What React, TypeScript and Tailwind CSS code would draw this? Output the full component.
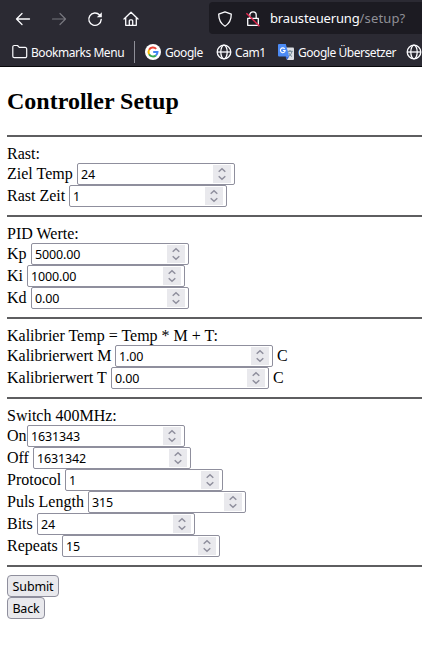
import React from 'react';

const ui = "font-['Noto_Sans','Open_Sans',sans-serif]";

function Globe() {
  return (
    <svg width="16" height="16" viewBox="0 0 16 16" fill="none" stroke="#fbfbfe" strokeWidth="1.3" className="shrink-0">
      <circle cx="8" cy="8" r="6.8" />
      <ellipse cx="8" cy="8" rx="3.2" ry="6.8" />
      <path d="M1.2 8h13.6" />
    </svg>
  );
}

function Google() {
  return (
    <svg width="16" height="16" viewBox="0 0 16 16" fill="none" strokeWidth="2" className="shrink-0">
      <circle cx="8" cy="8" r="8" fill="#fff" />
      <path d="M11.2 4.9A4.5 4.5 0 0 0 4.1 5.8" stroke="#ea4335" />
      <path d="M4.1 5.8a4.5 4.5 0 0 0 0 4.4" stroke="#fbbc05" />
      <path d="M4.1 10.2a4.5 4.5 0 0 0 6.8 1.2" stroke="#34a853" />
      <path d="M10.9 11.4A4.3 4.3 0 0 0 12.5 8.1H8.2" stroke="#4285f4" />
    </svg>
  );
}

function Translate() {
  return (
    <svg width="16" height="16" viewBox="0 0 16 16" fill="none" className="shrink-0">
      <path d="M6 3.5h9a1 1 0 0 1 1 1V15a1 1 0 0 1-1 1H9z" fill="#dcdfe4" />
      <path d="M9.3 7.3h5.4M12 6v1.3M14 7.5c-.7 2.5-2 4-3.5 5M10.7 8.6c.7 1.8 1.8 3 3.3 3.9" stroke="#607988" strokeWidth=".9" />
      <path d="M1 0h6.8l3.4 12.5H1a1 1 0 0 1-1-1V1a1 1 0 0 1 1-1z" fill="#4c8bf5" />
      <path d="M7.4 12.5h3.8L9 16z" fill="#3367d6" />
      <path d="M6.7 4.8a2.4 2.4 0 1 0 .5 1.7H4.9" stroke="#fff" strokeWidth="1.1" />
    </svg>
  );
}

function Browser() {
  return (
    <header className={`${ui} h-[67px] overflow-hidden border-b border-[#08080b] bg-[#2b2a33] text-[#fbfbfe]`}>
      <div className="flex h-[38px] items-center">
        <svg width="16" height="16" viewBox="0 0 16 16" fill="none" stroke="#fbfbfe" strokeWidth="1.3" strokeLinecap="round" strokeLinejoin="round" className="ml-[15px] shrink-0">
          <path d="M14.5 8H1.5M7 2.5L1.5 8 7 13.5" />
        </svg>
        <svg width="16" height="16" viewBox="0 0 16 16" fill="none" stroke="#77767e" strokeWidth="1.2" strokeLinecap="round" strokeLinejoin="round" className="ml-5 shrink-0">
          <path d="M1.5 8h13M9 2.5L14.5 8 9 13.5" />
        </svg>
        <svg width="16" height="16" viewBox="0 0 16 16" fill="none" stroke="#fbfbfe" strokeWidth="1.4" strokeLinecap="round" className="ml-5 shrink-0">
          <path d="M12.6 4A6.2 6.2 0 1 0 14.2 8.5" />
          <path d="M14.8 1.2V6.2H9.8z" fill="#fbfbfe" stroke="none" />
        </svg>
        <svg width="16" height="16" viewBox="0 0 16 16" fill="none" stroke="#fbfbfe" strokeWidth="1.3" strokeLinecap="round" strokeLinejoin="round" className="ml-5 shrink-0">
          <path d="M1 8l7-6.7L15 8M2.7 6.8v7.5h10.6V6.8M6.3 14V9.8c0-.6.4-1 1-1h1.4c.6 0 1 .4 1 1V14" />
        </svg>
        <div className="mt-[-2px] ml-[70px] flex h-[32px] w-[240px] shrink-0 items-center rounded-[4px] bg-[#1c1b22] pt-[2px]">
          <svg width="16" height="16" viewBox="0 0 16 16" fill="none" stroke="#fbfbfe" strokeWidth="1.3" strokeLinejoin="round" className="ml-[8px] shrink-0">
            <path d="M8 .8l6.3 2.3c0 5.7-1.7 9.5-6.3 12.1C3.4 12.6 1.7 8.8 1.7 3.1z" />
          </svg>
          <svg width="16" height="16" viewBox="0 0 16 16" fill="none" stroke="#fbfbfe" strokeWidth="1.3" strokeLinejoin="round" className="ml-[12px] shrink-0">
            <path d="M2.7 7.3h10.6v7H2.7zM4.8 7V4a3.2 3.2 0 0 1 6.4 0v3" />
            <path d="M1.4 2.2l13 13" stroke="#e22850" strokeWidth="1.5" />
          </svg>
          <span className="ml-[9px] text-[13px] tracking-[-0.15px] whitespace-nowrap">
            brausteuerung<span className="tracking-[0.15px] text-[#8f8f96]">/setup?</span>
          </span>
        </div>
      </div>
      <nav className="flex h-[28px] items-center text-[12px] tracking-[-0.45px] whitespace-nowrap">
        <svg width="16" height="16" viewBox="0 0 16 16" fill="none" stroke="#fbfbfe" strokeWidth="1.2" strokeLinejoin="round" className="ml-[12px] shrink-0">
          <path d="M.8 3a1.5 1.5 0 0 1 1.5-1.5h3.2L7.3 3.4h5.9a1.5 1.5 0 0 1 1.5 1.5v7.3a1.5 1.5 0 0 1-1.5 1.5H2.3a1.5 1.5 0 0 1-1.5-1.5z" />
        </svg>
        <span className="ml-[3px] w-[103px] shrink-0 pt-px">Bookmarks Menu</span>
        <span className="h-[22px] w-px shrink-0 bg-[#8f8f98]" />
        <span className="ml-[10px] flex w-[71px] shrink-0 items-center gap-[4px]"><Google /><span className="pt-px">Google</span></span>
        <span className="flex w-[62px] shrink-0 items-center gap-[3px]"><Globe /><span className="pt-px">Cam1</span></span>
        <span className="flex w-[128px] shrink-0 items-center gap-[4px]"><Translate /><span className="pt-px">Google Übersetzer</span></span>
        <Globe />
      </nav>
    </header>
  );
}

function Field({ label, width, value, unit }: { label: string; width: string; value: string; unit?: string }) {
  return (
    <div className="flex h-[22px] items-center">
      <label className={`${width} shrink-0 leading-[18px] whitespace-nowrap`}>{label}</label>
      <div className="flex h-[22px] w-[158px] shrink-0 items-center justify-between rounded-[2px] border border-[#8f8f9d] bg-white pr-[3px] pl-[3px]">
        <span className={`${ui} pt-[2px] text-[12.5px] leading-[18px] tracking-[-0.15px]`}>{value}</span>
        <span className="flex h-[18px] w-[18px] items-center justify-center bg-[#e9e9ed]">
          <svg width="18" height="18" viewBox="0 0 18 18" fill="none" stroke="#8f8f9d" strokeWidth="1.5">
            <path d="M5.7 6.8L9 3.8l3.3 3M5.7 11.2l3.3 3 3.3-3" />
          </svg>
        </span>
      </div>
      {unit && <span className="ml-[4px] leading-[18px]">{unit}</span>}
    </div>
  );
}

function Section({ title, children }: { title: string; children: React.ReactNode }) {
  return (
    <section className="border-t-2 border-[#5e5e60] py-2">
      <div className="h-[18px] leading-[18px]">{title}</div>
      {children}
    </section>
  );
}

const button = `${ui} h-[22px] rounded-[4px] border border-[#8f8f9d] bg-[#e9e9ed] pt-[2px] text-[12.5px] leading-[18px] tracking-[-0.15px]`;

export default function App() {
  return (
    <div className="h-[647px] w-[422px] overflow-hidden bg-white text-black">
      <Browser />
      <main className="pl-[7px] font-['Liberation_Serif','Times_New_Roman',serif] text-[16px]">
        <h1 className="h-[68px] pt-[20px] text-[24px] leading-[28px] font-bold">Controller Setup</h1>
        <Section title="Rast:">
          <Field label="Ziel Temp" width="w-[70px]" value="24" />
          <Field label="Rast Zeit" width="w-[62px]" value="1" />
        </Section>
        <Section title="PID Werte:">
          <Field label="Kp" width="w-[24px]" value="5000.00" />
          <Field label="Ki" width="w-[20px]" value="1000.00" />
          <Field label="Kd" width="w-[24px]" value="0.00" />
        </Section>
        <Section title="Kalibrier Temp = Temp * M + T:">
          <Field label="Kalibrierwert M" width="w-[108px]" value="1.00" unit="C" />
          <Field label="Kalibrierwert T" width="w-[104px]" value="0.00" unit="C" />
        </Section>
        <Section title="Switch 400MHz:">
          <Field label="On" width="w-[20px]" value="1631343" />
          <Field label="Off" width="w-[26px]" value="1631342" />
          <Field label="Protocol" width="w-[58px]" value="1" />
          <Field label="Puls Length" width="w-[81px]" value="315" />
          <Field label="Bits" width="w-[30px]" value="24" />
          <Field label="Repeats" width="w-[55px]" value="15" />
        </Section>
        <div className="flex flex-col items-start border-t-2 border-[#5e5e60] pt-2">
          <button className={`${button} w-[52px]`}>Submit</button>
          <button className={`${button} w-[38px]`}>Back</button>
        </div>
      </main>
    </div>
  );
}
